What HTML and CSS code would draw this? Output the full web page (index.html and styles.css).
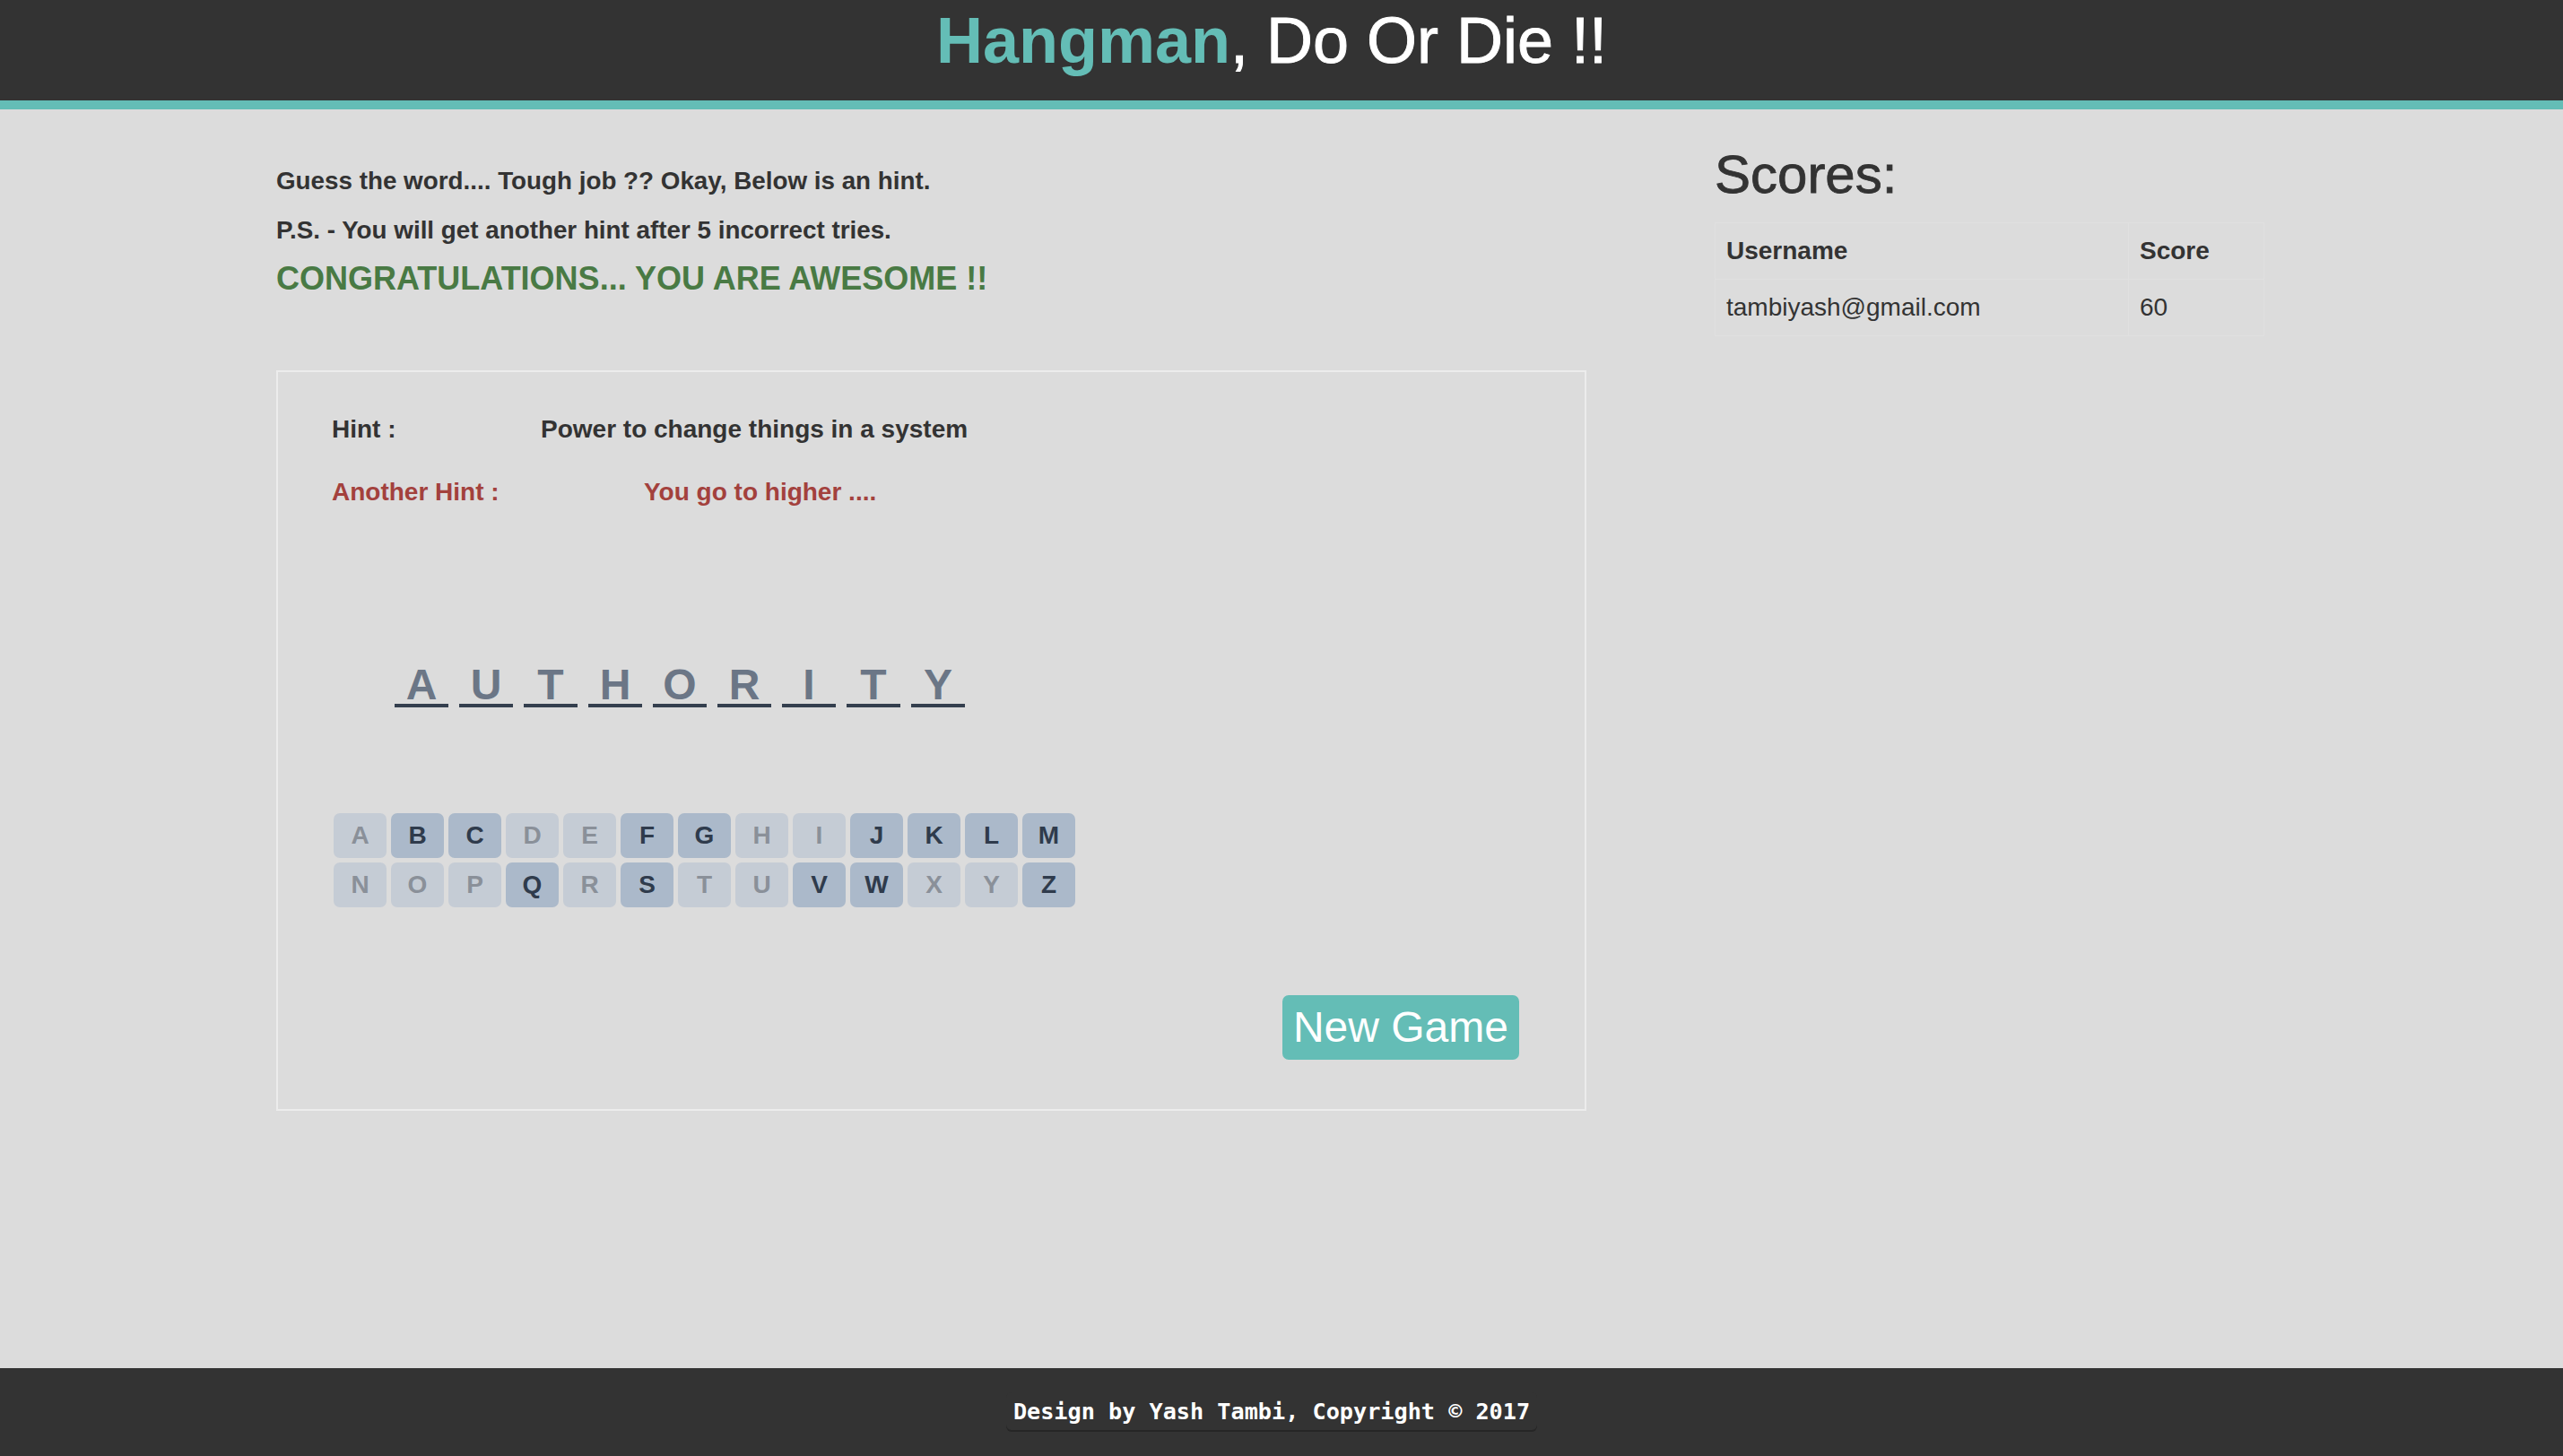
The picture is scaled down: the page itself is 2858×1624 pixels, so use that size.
FILE: index.html
```html
<!DOCTYPE html>
<html lang="en">
<head>
<meta charset="utf-8">
<title>Hangman, Do Or Die !!</title>
<link rel="stylesheet" href="styles.css">
</head>
<body>
<header class="header">
  <h1 class="title"><span class="brand">Hangman</span>, Do Or Die !!</h1>
</header>
<main class="main">
  <div class="container">
    <section class="game">
      <p class="intro">Guess the word.... Tough job ?? Okay, Below is an hint.</p>
      <p class="intro intro-last">P.S. - You will get another hint after 5 incorrect tries.</p>
      <h3 class="congrats">CONGRATULATIONS... YOU ARE AWESOME !!</h3>
      <div class="board">
        <div class="hint-row">
          <span class="hint-label">Hint :</span>
          <span class="hint-text">Power to change things in a system</span>
        </div>
        <div class="hint-row hint-danger">
          <span class="hint-label hint-label-wide">Another Hint :</span>
          <span class="hint-text">You go to higher ....</span>
        </div>
        <div class="word">
          <span class="slot">A</span><span class="slot">U</span><span class="slot">T</span><span class="slot">H</span><span class="slot">O</span><span class="slot">R</span><span class="slot">I</span><span class="slot">T</span><span class="slot">Y</span>
        </div>
        <div class="keyboard">
          <span class="key used">A</span><span class="key">B</span><span class="key">C</span><span class="key used">D</span><span class="key used">E</span><span class="key">F</span><span class="key">G</span><span class="key used">H</span><span class="key used">I</span><span class="key">J</span><span class="key">K</span><span class="key">L</span><span class="key">M</span>
          <span class="key used">N</span><span class="key used">O</span><span class="key used">P</span><span class="key">Q</span><span class="key used">R</span><span class="key">S</span><span class="key used">T</span><span class="key used">U</span><span class="key">V</span><span class="key">W</span><span class="key used">X</span><span class="key used">Y</span><span class="key">Z</span>
        </div>
        <button class="new-game" type="button">New Game</button>
      </div>
    </section>
    <aside class="scores">
      <h2 class="scores-title">Scores:</h2>
      <table class="score-table">
        <thead>
          <tr><th class="col-user">Username</th><th>Score</th></tr>
        </thead>
        <tbody>
          <tr><td class="col-user">tambiyash@gmail.com</td><td>60</td></tr>
        </tbody>
      </table>
    </aside>
  </div>
</main>
<footer class="footer">
  <kbd class="credit">Design by Yash Tambi, Copyright © 2017</kbd>
</footer>
</body>
</html>
```
FILE: styles.css
```css
* { box-sizing: border-box; }

html, body { height: 100%; }

body {
  margin: 0;
  min-height: 100vh;
  display: flex;
  flex-direction: column;
  font-family: "Liberation Sans", Arial, Helvetica, sans-serif;
  color: #333;
  background: #dcdcdc;
}

.header {
  background: #333;
  border-bottom: 10px solid #64bdb6;
  height: 122px;
  text-align: center;
  padding-right: 22px;
}

.title {
  margin: 0;
  padding-top: 6px;
  font-size: 72px;
  line-height: 79px;
  font-weight: 400;
  color: #fff;
  -webkit-text-stroke: 0.9px #fff;
}

.brand {
  color: #64bdb6;
  font-weight: 700;
  -webkit-text-stroke: 0;
}

.main { flex: 1; }

.container {
  display: flex;
  padding-left: 308px;
}

.game {
  width: 1461px;
  padding-top: 60px;
}

.intro {
  margin: 0 0 15px;
  font-size: 27.8px;
  line-height: 40px;
  font-weight: 700;
}

.intro-last { margin-bottom: 12px; }

.congrats {
  margin: 0;
  font-size: 36px;
  line-height: 44px;
  font-weight: 700;
  color: #497a44;
}

.board {
  margin-top: 80px;
  border: 2px solid #ececec;
  padding: 44px 73px 55px 60px;
  display: flex;
  flex-direction: column;
}

.hint-row {
  display: flex;
  font-size: 28px;
  line-height: 40px;
  font-weight: 700;
  color: #333;
}

.hint-row + .hint-row { margin-top: 30px; }

.hint-danger { color: #a3413d; }

.hint-label { width: 233px; flex: none; }
.hint-label-wide { width: 348px; }

.word {
  display: flex;
  gap: 12px;
  margin: 174px 0 0 70px;
}

.slot {
  width: 60px;
  text-align: center;
  font-size: 48px;
  line-height: 42px;
  font-weight: 700;
  color: #6b7686;
  border-bottom: 4px solid #343f4e;
}

.keyboard {
  display: grid;
  grid-template-columns: repeat(13, 59px);
  grid-auto-rows: 50px;
  gap: 5px;
  margin: 118px 0 0 2px;
}

.key {
  display: flex;
  align-items: center;
  justify-content: center;
  border-radius: 7px;
  background: #abb9ca;
  color: #2f3b4c;
  font-size: 28px;
  font-weight: 700;
}

.key.used {
  background: #c5ccd5;
  color: #8a9099;
}

.new-game {
  align-self: flex-end;
  margin-top: 98px;
  height: 72px;
  padding: 0 12px;
  border: 0;
  border-radius: 7px;
  background: #64bdb6;
  color: #fff;
  font-family: "Liberation Sans", Arial, Helvetica, sans-serif;
  font-size: 48px;
  line-height: 72px;
}

.scores {
  width: 613px;
  margin-left: 143px;
  padding-top: 40px;
}

.scores-title {
  margin: 0 0 20px;
  font-size: 60px;
  line-height: 66px;
  font-weight: 500;
  -webkit-text-stroke: 0.8px #333;
}

.score-table {
  width: 613px;
  border-collapse: collapse;
  font-size: 28px;
  line-height: 38px;
}

.score-table th,
.score-table td {
  padding: 12px;
  text-align: left;
  border: 1px solid #e0e0e0;
}

.score-table th { font-weight: 700; }

.col-user { width: 461px; }

.footer {
  height: 98px;
  background: #333;
  display: flex;
  align-items: center;
  justify-content: center;
  padding-right: 22px;
}

.credit {
  padding: 4px 8px;
  border-radius: 6px;
  background: #333;
  color: #fff;
  font-family: "DejaVu Sans Mono", "Liberation Mono", monospace;
  font-size: 25.2px;
  line-height: 36px;
  font-weight: 700;
  box-shadow: inset 0 -2px 0 rgba(0, 0, 0, 0.25);
}
```
